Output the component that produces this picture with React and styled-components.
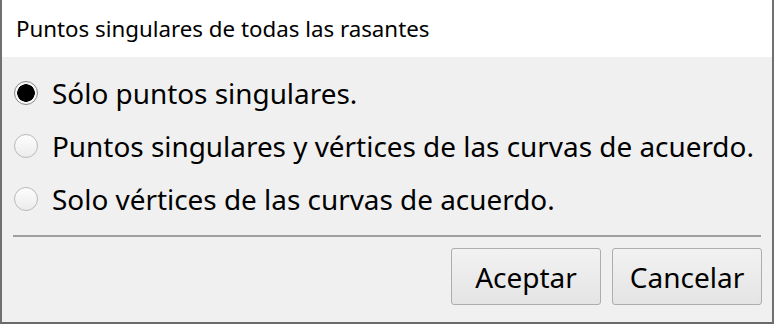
import React, { useState } from "react";
import styled, { createGlobalStyle } from "styled-components";

const Global = createGlobalStyle`
  html, body {
    margin: 0;
    padding: 0;
    background: #6f6f6f;
  }
`;

const Window = styled.div`
  width: 774px;
  height: 324px;
  box-sizing: border-box;
  border-left: 2px solid #707070;
  border-right: 2px solid #707070;
  border-bottom: 2px solid #6a6a6a;
  background: #f0f0f0;
  display: flex;
  flex-direction: column;
  font-family: "Noto Sans", "Open Sans", sans-serif;
  color: #000;
`;

const TitleBar = styled.div`
  height: 57px;
  background: #fff;
  display: flex;
  align-items: center;
  padding: 0 0 1px 14px;
  box-sizing: border-box;
  font-size: 22.3px;
`;

const Options = styled.div`
  display: flex;
  flex-direction: column;
  padding: 9px 0 0 12px;
`;

const Row = styled.label`
  height: 53px;
  display: flex;
  align-items: center;
  gap: 14px;
  font-size: 27.9px;
  cursor: default;
`;

const Radio = styled.span`
  width: 24px;
  height: 24px;
  box-sizing: border-box;
  border-radius: 50%;
  border: 1px solid ${(p) => (p.$on ? "#8a8a8a" : "#b9b9b9")};
  background: ${(p) =>
    p.$on
      ? "radial-gradient(circle, #000 0 8.5px, #f6f6f6 9px 11px)"
      : "linear-gradient(#fdfdfd, #ececec)"};
  flex: none;
`;

const Separator = styled.hr`
  margin: 10px 11px 0 11px;
  border: none;
  border-top: 2px solid #a0a0a0;
  height: 0;
`;

const Buttons = styled.div`
  display: flex;
  justify-content: flex-end;
  gap: 11px;
  padding: 11px 10px 0 0;
`;

const Button = styled.button`
  width: 150px;
  height: 57px;
  border: 1px solid #adadad;
  border-radius: 3px;
  background: linear-gradient(#f2f2f2, #e4e4e4);
  font-family: inherit;
  font-size: 28px;
  color: #000;
  padding: 0;
`;

const choices = [
  "Sólo puntos singulares.",
  "Puntos singulares y vértices de las curvas de acuerdo.",
  "Solo vértices de las curvas de acuerdo.",
];

export default function App() {
  const [sel, setSel] = useState(0);
  return (
    <>
      <Global />
      <Window>
        <TitleBar>Puntos singulares de todas las rasantes</TitleBar>
        <Options>
          {choices.map((c, i) => (
            <Row key={i} onClick={() => setSel(i)}>
              <Radio $on={sel === i} />
              {c}
            </Row>
          ))}
        </Options>
        <Separator />
        <Buttons>
          <Button>Aceptar</Button>
          <Button>Cancelar</Button>
        </Buttons>
      </Window>
    </>
  );
}
